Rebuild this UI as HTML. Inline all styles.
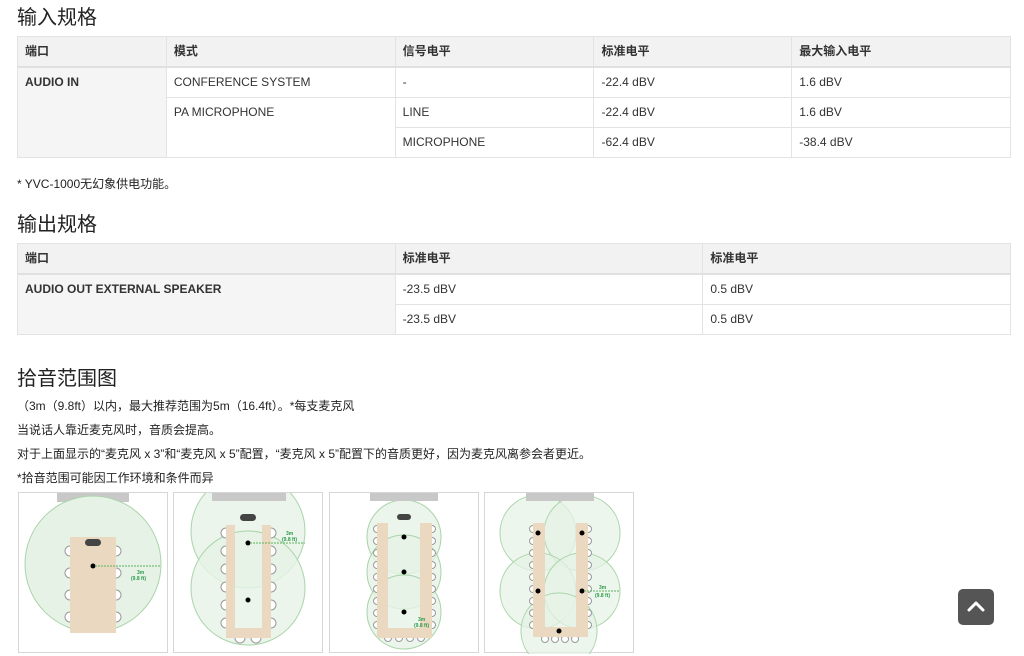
<!DOCTYPE html>
<html><head><meta charset="utf-8"><style>
*{margin:0;padding:0;box-sizing:border-box}
body{width:1024px;height:656px;background:#fff;font-family:"Liberation Sans","Noto Sans CJK SC",sans-serif;color:#222;position:relative;overflow:hidden}
.a{position:absolute;white-space:nowrap}
h2{position:absolute;font-weight:normal;font-size:20px;color:#222;left:17px;line-height:24px}
table{position:absolute;left:17px;width:994px;border-collapse:collapse;font-size:12px;color:#333}
td{border:1px solid #e3e3e3;padding:0 7px;vertical-align:top;height:30px;line-height:29px}
tr.h td{background:#f2f2f2;font-weight:bold;height:30px;border-bottom:2px solid #e0e0e0}
td.f{background:#f5f5f5;font-weight:bold}
p{position:absolute;left:17px;font-size:12px;color:#222;white-space:nowrap}
.pn{position:absolute;top:492px;width:150px;height:161px;border:1px solid #d6d6d6;background:#fff}
.pn svg{display:block}
.top{position:absolute;left:958px;top:589px;width:36px;height:36px;background:#555;border-radius:5px}
</style></head><body>
<h2 style="top:6px">输入规格</h2>
<table style="top:36px">
<colgroup><col style="width:149px"><col style="width:229px"><col style="width:199px"><col style="width:198px"><col style="width:219px"></colgroup>
<tr class="h"><td>端口</td><td>模式</td><td>信号电平</td><td>标准电平</td><td>最大输入电平</td></tr>
<tr><td class="f" rowspan="3">AUDIO IN</td><td>CONFERENCE SYSTEM</td><td>-</td><td>-22.4 dBV</td><td>1.6 dBV</td></tr>
<tr><td rowspan="2">PA MICROPHONE</td><td>LINE</td><td>-22.4 dBV</td><td>1.6 dBV</td></tr>
<tr><td>MICROPHONE</td><td>-62.4 dBV</td><td>-38.4 dBV</td></tr>
</table>
<p style="top:175px">* YVC-1000无幻象供电功能。</p>
<h2 style="top:213px">输出规格</h2>
<table style="top:243px">
<colgroup><col style="width:378px"><col style="width:308px"><col style="width:308px"></colgroup>
<tr class="h"><td>端口</td><td>标准电平</td><td>标准电平</td></tr>
<tr><td class="f" rowspan="2">AUDIO OUT EXTERNAL SPEAKER</td><td>-23.5 dBV</td><td>0.5 dBV</td></tr>
<tr><td>-23.5 dBV</td><td>0.5 dBV</td></tr>
</table>
<h2 style="top:367px">拾音范围图</h2>
<p style="top:397px">（3m（9.8ft）以内，最大推荐范围为5m（16.4ft）。*每支麦克风</p>
<p style="top:421px">当说话人靠近麦克风时，音质会提高。</p>
<p style="top:445px">对于上面显示的“麦克风 x 3”和“麦克风 x 5”配置，“麦克风 x 5”配置下的音质更好，因为麦克风离参会者更近。</p>
<p style="top:469px">*拾音范围可能因工作环境和条件而异</p>

<div class="pn" style="left:18px"><svg width="150" height="161" viewBox="0 0 150 161">
<rect x="38" y="0" width="72" height="9" fill="#c8c8c8"/>
<circle cx="74" cy="71" r="68" fill="#e6f2e6" stroke="#a9d4a9"/>
<g fill="#fff" stroke="#999"><circle cx="51" cy="58" r="5"/><circle cx="51" cy="80" r="5"/><circle cx="51" cy="102" r="5"/><circle cx="51" cy="124" r="5"/><circle cx="97" cy="58" r="5"/><circle cx="97" cy="80" r="5"/><circle cx="97" cy="102" r="5"/><circle cx="97" cy="124" r="5"/></g>
<rect x="51" y="44" width="46" height="96" fill="#ead9c0"/>
<rect x="66" y="46" width="16" height="7" rx="3.5" fill="#444"/>
<circle cx="74" cy="73" r="2.5" fill="#000"/>
<line x1="76" y1="73" x2="142" y2="73" stroke="#5bb35b" stroke-dasharray="2 1"/>
<text x="118" y="81" font-size="5" fill="#2a9a4a" font-weight="bold">3m</text><text x="112" y="87" font-size="5" fill="#2a9a4a" font-weight="bold">(9.8 ft)</text>
</svg></div>

<div class="pn" style="left:173px"><svg width="150" height="161" viewBox="0 0 150 161">
<circle cx="74" cy="38" r="57" fill="#e6f2e6" fill-opacity=".8" stroke="#a9d4a9"/>
<circle cx="74" cy="95" r="57" fill="#e6f2e6" fill-opacity=".8" stroke="#a9d4a9"/>
<rect x="38" y="0" width="74" height="8" fill="#c8c8c8"/>
<g fill="#fff" stroke="#999"><circle cx="52" cy="40" r="5"/><circle cx="52" cy="58" r="5"/><circle cx="52" cy="76" r="5"/><circle cx="52" cy="94" r="5"/><circle cx="52" cy="112" r="5"/><circle cx="52" cy="130" r="5"/><circle cx="97" cy="40" r="5"/><circle cx="97" cy="58" r="5"/><circle cx="97" cy="76" r="5"/><circle cx="97" cy="94" r="5"/><circle cx="97" cy="112" r="5"/><circle cx="97" cy="130" r="5"/><circle cx="66" cy="145" r="5"/><circle cx="82" cy="145" r="5"/></g>
<path d="M52 32h9v103h27V32h9v113H52z" fill="#ead9c0"/>
<rect x="66" y="21" width="16" height="7" rx="3.5" fill="#444"/>
<circle cx="74" cy="50" r="2.5" fill="#000"/><circle cx="74" cy="107" r="2.5" fill="#000"/>
<line x1="76" y1="50" x2="131" y2="50" stroke="#5bb35b" stroke-dasharray="2 1"/>
<text x="112" y="42" font-size="5" fill="#2a9a4a" font-weight="bold">3m</text><text x="108" y="48" font-size="5" fill="#2a9a4a" font-weight="bold">(9.8 ft)</text>
</svg></div>

<div class="pn" style="left:329px"><svg width="150" height="161" viewBox="0 0 150 161">
<circle cx="74" cy="44" r="37" fill="#e6f2e6" fill-opacity=".8" stroke="#a9d4a9"/>
<circle cx="74" cy="79" r="37" fill="#e6f2e6" fill-opacity=".8" stroke="#a9d4a9"/>
<circle cx="74" cy="119" r="37" fill="#e6f2e6" fill-opacity=".8" stroke="#a9d4a9"/>
<rect x="40" y="0" width="68" height="8" fill="#c8c8c8"/>
<g fill="#fff" stroke="#999"><circle cx="47" cy="36" r="3.5"/><circle cx="47" cy="48" r="3.5"/><circle cx="47" cy="60" r="3.5"/><circle cx="47" cy="72" r="3.5"/><circle cx="47" cy="84" r="3.5"/><circle cx="47" cy="96" r="3.5"/><circle cx="47" cy="108" r="3.5"/><circle cx="47" cy="120" r="3.5"/><circle cx="47" cy="132" r="3.5"/><circle cx="102" cy="36" r="3.5"/><circle cx="102" cy="48" r="3.5"/><circle cx="102" cy="60" r="3.5"/><circle cx="102" cy="72" r="3.5"/><circle cx="102" cy="84" r="3.5"/><circle cx="102" cy="96" r="3.5"/><circle cx="102" cy="108" r="3.5"/><circle cx="102" cy="120" r="3.5"/><circle cx="102" cy="132" r="3.5"/><circle cx="58" cy="145" r="3.5"/><circle cx="69" cy="145" r="3.5"/><circle cx="80" cy="145" r="3.5"/><circle cx="91" cy="145" r="3.5"/></g>
<path d="M47 30h11v105h32V30h12v115H47z" fill="#ead9c0"/>
<rect x="67" y="21" width="14" height="6" rx="3" fill="#444"/>
<circle cx="74" cy="44" r="2.5" fill="#000"/><circle cx="74" cy="79" r="2.5" fill="#000"/><circle cx="74" cy="119" r="2.5" fill="#000"/>
<text x="88" y="128" font-size="5" fill="#2a9a4a" font-weight="bold">3m</text><text x="84" y="134" font-size="5" fill="#2a9a4a" font-weight="bold">(9.8 ft)</text>
</svg></div>

<div class="pn" style="left:484px"><svg width="150" height="161" viewBox="0 0 150 161">
<circle cx="53" cy="40" r="38" fill="#e6f2e6" fill-opacity=".7" stroke="#a9d4a9"/>
<circle cx="97" cy="40" r="38" fill="#e6f2e6" fill-opacity=".7" stroke="#a9d4a9"/>
<circle cx="53" cy="98" r="38" fill="#e6f2e6" fill-opacity=".7" stroke="#a9d4a9"/>
<circle cx="97" cy="98" r="38" fill="#e6f2e6" fill-opacity=".7" stroke="#a9d4a9"/>
<circle cx="74" cy="138" r="38" fill="#e6f2e6" fill-opacity=".7" stroke="#a9d4a9"/>
<rect x="41" y="0" width="68" height="8" fill="#c8c8c8"/>
<g fill="#fff" stroke="#999"><circle cx="48" cy="36" r="3.5"/><circle cx="48" cy="48" r="3.5"/><circle cx="48" cy="60" r="3.5"/><circle cx="48" cy="72" r="3.5"/><circle cx="48" cy="84" r="3.5"/><circle cx="48" cy="96" r="3.5"/><circle cx="48" cy="108" r="3.5"/><circle cx="48" cy="120" r="3.5"/><circle cx="48" cy="132" r="3.5"/><circle cx="103" cy="36" r="3.5"/><circle cx="103" cy="48" r="3.5"/><circle cx="103" cy="60" r="3.5"/><circle cx="103" cy="72" r="3.5"/><circle cx="103" cy="84" r="3.5"/><circle cx="103" cy="96" r="3.5"/><circle cx="103" cy="108" r="3.5"/><circle cx="103" cy="120" r="3.5"/><circle cx="103" cy="132" r="3.5"/><circle cx="60" cy="146" r="3.5"/><circle cx="70" cy="146" r="3.5"/><circle cx="80" cy="146" r="3.5"/><circle cx="90" cy="146" r="3.5"/></g>
<path d="M48 30h12v104h31V30h12v114H48z" fill="#ead9c0"/>
<circle cx="53" cy="40" r="2.5" fill="#000"/><circle cx="97" cy="40" r="2.5" fill="#000"/><circle cx="53" cy="98" r="2.5" fill="#000"/><circle cx="97" cy="98" r="2.5" fill="#000"/><circle cx="74" cy="138" r="2.5" fill="#000"/>
<line x1="99" y1="98" x2="135" y2="98" stroke="#5bb35b" stroke-dasharray="2 1"/>
<text x="114" y="96" font-size="5" fill="#2a9a4a" font-weight="bold">3m</text><text x="110" y="104" font-size="5" fill="#2a9a4a" font-weight="bold">(9.8 ft)</text>
</svg></div>

<div class="top"><svg width="36" height="36" viewBox="0 0 36 36"><path d="M11 21l7-7 7 7" fill="none" stroke="#fff" stroke-width="3" stroke-linecap="round" stroke-linejoin="round"/></svg></div>
</body></html>
